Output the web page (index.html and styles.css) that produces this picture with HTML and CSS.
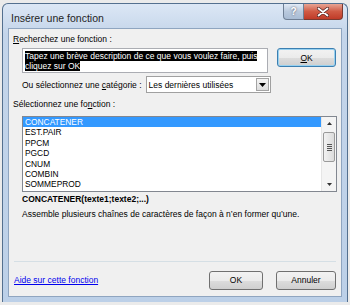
FILE: index.html
```html
<!DOCTYPE html>
<html>
<head>
<meta charset="utf-8">
<title>Insérer une fonction</title>
<link rel="stylesheet" href="styles.css">
</head>
<body>
<div class="window">
  <div class="titlebar">
    <span class="title">Insérer une fonction</span>
    <div class="caption-btns">
      <span class="cap help">?</span>
      <span class="cap close">
        <svg width="12" height="10" viewBox="0 0 12 10"><path d="M1.5 1.5 L10.5 8.5 M10.5 1.5 L1.5 8.5" stroke="#4a2020" stroke-width="3.2" stroke-linecap="round"/><path d="M1.5 1.5 L10.5 8.5 M10.5 1.5 L1.5 8.5" stroke="#fff" stroke-width="1.8" stroke-linecap="round"/></svg>
      </span>
    </div>
  </div>
  <div class="client">
    <div class="label"><u>R</u>echerchez une fonction :</div>
    <div class="search-row">
      <div class="searchbox"><span class="sel">Tapez une brève description de ce que vous voulez faire, puis</span><br><span class="sel">cliquez sur OK</span></div>
      <div class="btn focus"><u>O</u>K</div>
    </div>
    <div class="cat-row">
      <span>Ou sélectionnez une <u>c</u>atégorie :</span>
      <div class="combo"><span class="combo-text">Les dernières utilisées</span><span class="drop"><svg width="7" height="4" viewBox="0 0 7 4"><path d="M0 0 H7 L3.5 4 Z" fill="#000"/></svg></span></div>
    </div>
    <div class="label second">Sélectionnez une fo<u>n</u>ction :</div>
    <div class="listbox">
      <ul class="items">
        <li class="active">CONCATENER</li>
        <li>EST.PAIR</li>
        <li>PPCM</li>
        <li>PGCD</li>
        <li>CNUM</li>
        <li>COMBIN</li>
        <li>SOMMEPROD</li>
      </ul>
      <div class="scrollbar">
        <span class="arrow"><svg width="5" height="3" viewBox="0 0 5 3"><path d="M0 3 H5 L2.5 0 Z" fill="#333"/></svg></span>
        <span class="thumb"><i></i><i></i><i></i><i></i></span>
        <span class="arrow down"><svg width="5" height="3" viewBox="0 0 5 3"><path d="M0 0 H5 L2.5 3 Z" fill="#333"/></svg></span>
      </div>
    </div>
    <div class="signature">CONCATENER(texte1;texte2;...)</div>
    <div class="desc">Assemble plusieurs chaînes de caractères de façon à n’en former qu’une.</div>
    <div class="separator"></div>
    <div class="footer">
      <a class="help-link" href="#">Aide sur cette fonction</a>
      <div class="btn">OK</div>
      <div class="btn">Annuler</div>
    </div>
  </div>
</div>
</body>
</html>
```

FILE: styles.css
```css
body{margin:0; background:#ebebeb; font-family:"Liberation Sans", Arial, sans-serif; font-size:8.5px; color:#000;}

.window{margin:3px 2px 0 2px; height:299px; box-sizing:border-box; border:1px solid #54708f; border-bottom:none; border-radius:6px 6px 0 0; background:linear-gradient(#dce7f5, #c4d5ea 30px, #bcd0e8); padding:0 5px 5px 5px; display:flex; flex-direction:column;}

.titlebar{height:24px; display:flex; align-items:flex-start; justify-content:space-between;}
.title{font-size:10.5px; padding-left:3px; padding-top:8px; color:#1e1e1e;}

.caption-btns{display:flex; margin-right:-1px;}
.cap{height:16px; display:flex; align-items:center; justify-content:center; border:1px solid #6f7f94; border-top:none; box-sizing:border-box;}
.help{width:21px; background:linear-gradient(#e2ebf6, #b9c9dd 50%, #a9bcd4); color:#fff; font-weight:bold; font-size:10px; border-radius:0 0 0 4px; text-shadow:0 0 2px #445;}
.close{width:39px; background:linear-gradient(#e8a493, #d05a44 50%, #c03b28); border-color:#7a3a30; border-left:none; border-radius:0 0 4px 0;}

.client{flex:1; background:#f0f0f0; border:1px solid #8fa5c0; padding:4px 5px 0 4px; display:flex; flex-direction:column;}

.label{height:12px; line-height:12px; margin-top:0;}
.label.second{margin-top:5px;}

.search-row{display:flex; align-items:flex-start; margin-top:3px; margin-left:9px;}
.searchbox{width:247px; height:25px; box-sizing:border-box; border:1px solid #abadb3; background:#fff; padding:2px 2px 0 2px; line-height:10px; color:#fff;}
.sel{background:#000;}

.btn{width:59px; height:19px; box-sizing:border-box; border:1px solid #707070; border-radius:3px; background:linear-gradient(#f2f2f2, #ebebeb 50%, #dddddd 51%, #cfcfcf); display:flex; align-items:center; justify-content:center;}
.btn.focus{margin-left:9px; border-color:#3c7fb1; box-shadow:inset 0 0 0 1px #97d1f0;}

.cat-row{display:flex; align-items:center; margin-top:3px; margin-left:9px; height:17px;}
.combo{margin-left:4px; width:125px; height:17px; box-sizing:border-box; border:1px solid #a0a0a0; background:#fff; display:flex; align-items:center;}
.combo-text{flex:1; padding-left:2px;}
.drop{width:13px; height:13px; margin-right:1px; box-sizing:border-box; border:1px solid #a3a3a3; background:linear-gradient(#f4f4f4, #dcdcdc); display:flex; align-items:center; justify-content:center;}

.listbox{margin-top:6px; margin-left:9px; width:315px; height:76px; box-sizing:border-box; border:1px solid #828790; background:#fff; display:flex; font-size:8.4px;}
.items{list-style:none; margin:0; padding:0; flex:1;}
.items li{height:10.4px; line-height:10.4px; padding-left:2px;}
.items li.active{background:#3399ff; color:#fff;}
.scrollbar{width:14px; background:#f4f4f4; border-left:1px solid #e6e6e6; display:flex; flex-direction:column; align-items:center;}
.arrow{height:13px; display:flex; align-items:center;}
.arrow.down{margin-top:auto;}
.thumb{margin-top:2px; width:12px; height:30px; box-sizing:border-box; border:1px solid #9a9a9a; border-radius:2px; background:linear-gradient(90deg, #f2f2f2, #dcdcdc); display:flex; flex-direction:column; align-items:center; justify-content:center; gap:1px;}
.thumb i{display:block; width:5px; height:1px; background:#555;}

.signature{margin-top:1px; margin-left:9px; font-weight:bold; height:12px; line-height:12px;}
.desc{margin-left:9px; margin-top:3px; height:12px; line-height:12px;}

.separator{margin-top:auto; margin-left:1px; margin-right:0; height:0; border-top:1px solid #d5dfe5;}
.footer{display:flex; align-items:center; height:18px; margin:9px 0 7px 0;}
.help-link{color:#0000ee; flex:1; padding-left:1px;}
.footer .btn{width:54px; margin-left:13px;}
.footer .btn:last-child{width:60px;}
```
